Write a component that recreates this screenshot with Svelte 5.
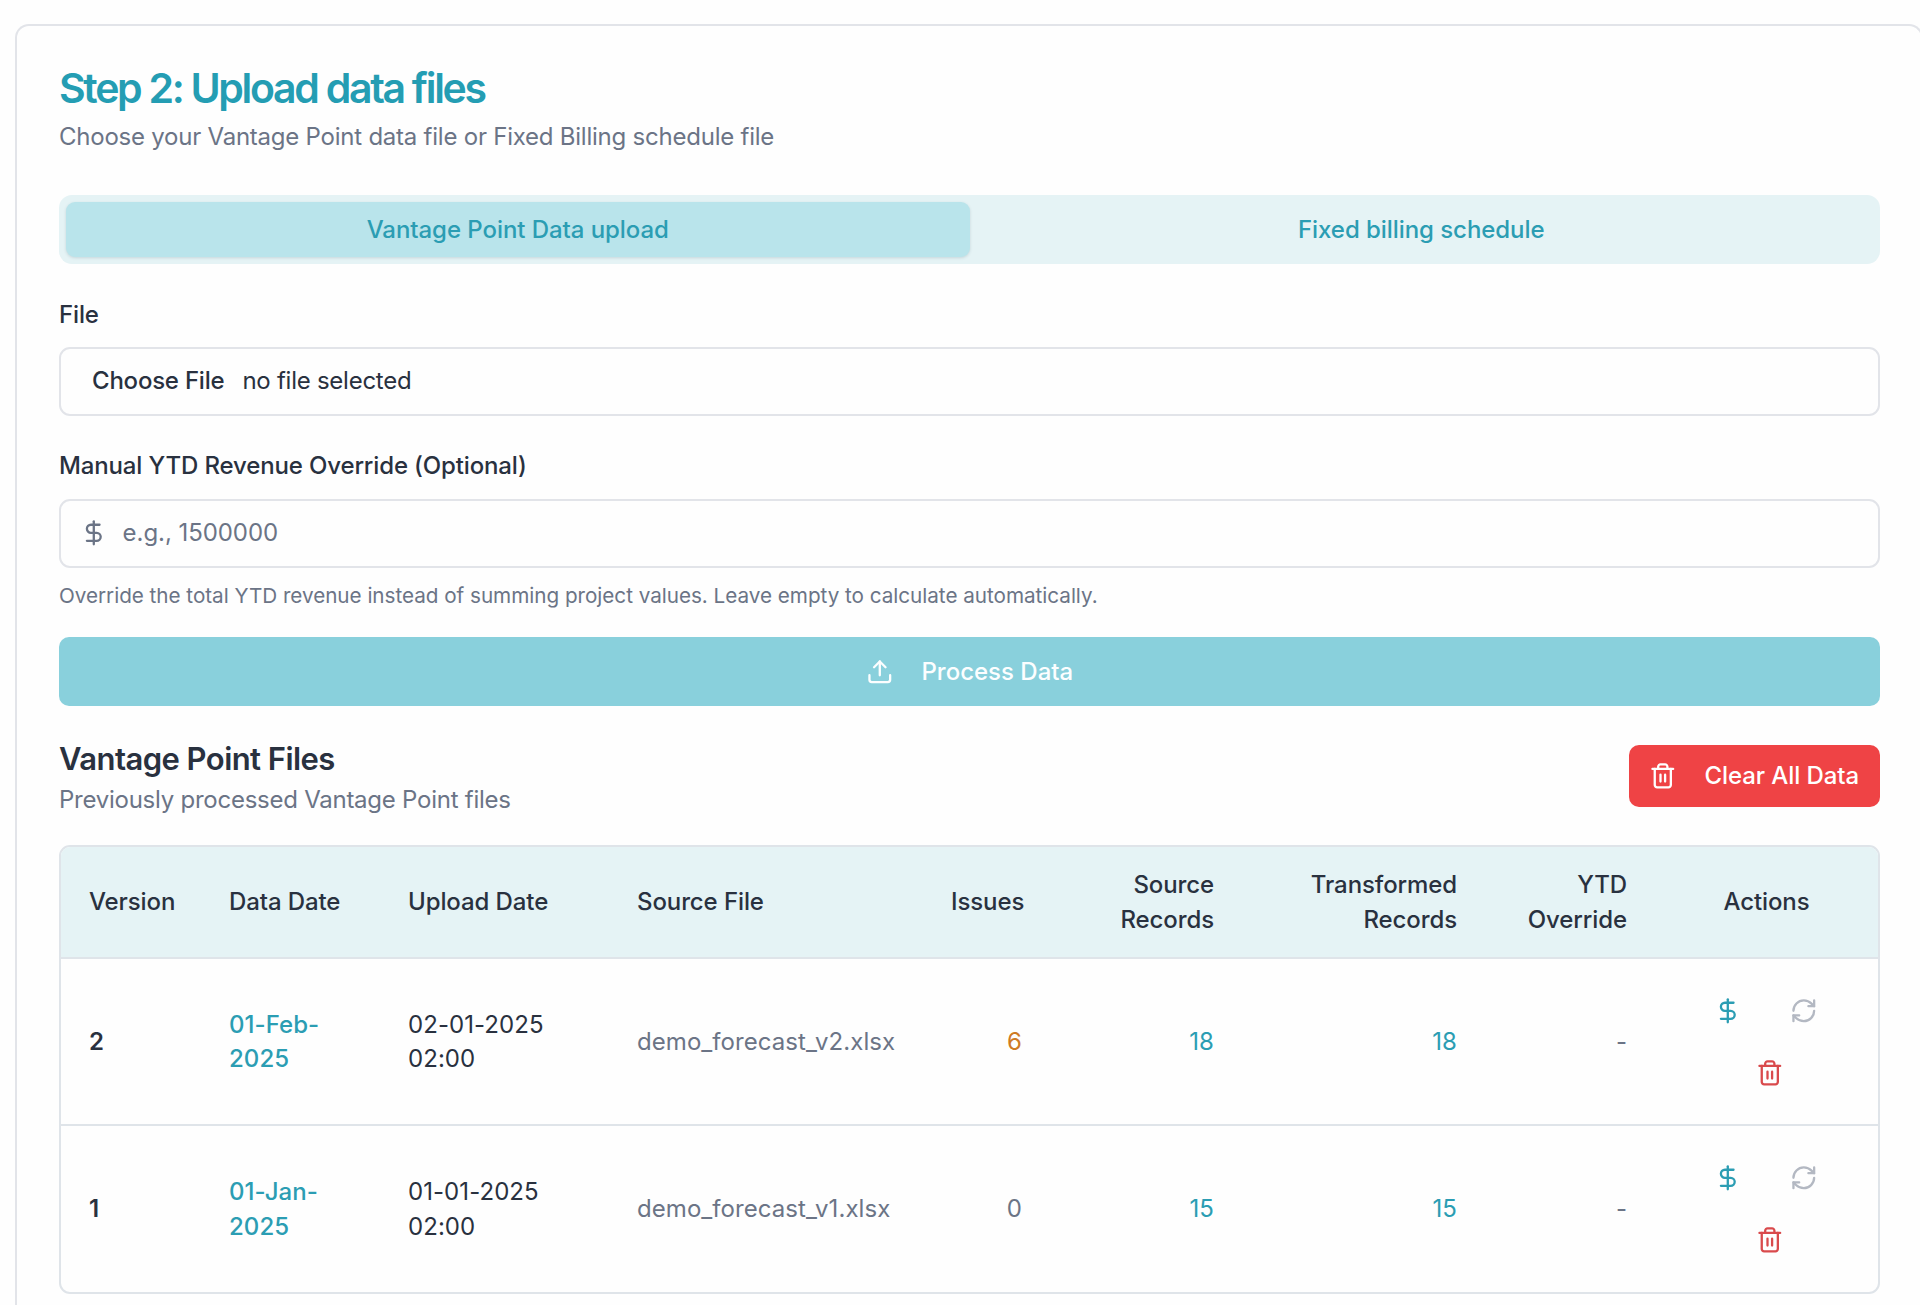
<script>
  let tab = 'vantage'

  const tabs = [
    { id: 'vantage', label: 'Vantage Point Data upload' },
    { id: 'fixed', label: 'Fixed billing schedule' }
  ]

  const files = [
    {
      version: 2,
      dataDate: '01-Feb-2025',
      uploadDate: '02-01-2025 02:00',
      source: 'demo_forecast_v2.xlsx',
      issues: 6,
      records: 18,
      transformed: 18
    },
    {
      version: 1,
      dataDate: '01-Jan-2025',
      uploadDate: '01-01-2025 02:00',
      source: 'demo_forecast_v1.xlsx',
      issues: 0,
      records: 15,
      transformed: 15
    }
  ]

  const icons = {
    dollar: ['M12 2v20', 'M17 5H9.5a3.5 3.5 0 0 0 0 7h5a3.5 3.5 0 0 1 0 7H6'],
    upload: [
      'M21 15v4a2 2 0 0 1-2 2H5a2 2 0 0 1-2-2v-4',
      'M17 8l-5-5-5 5',
      'M12 3v12'
    ],
    trash: [
      'M3 6h18',
      'M19 6v14c0 1-1 2-2 2H7c-1 0-2-1-2-2V6',
      'M8 6V4c0-1 1-2 2-2h4c1 0 2 1 2 2v2',
      'M10 11v6',
      'M14 11v6'
    ],
    refresh: [
      'M3 12a9 9 0 0 1 9-9 9.75 9.75 0 0 1 6.74 2.74L21 8',
      'M21 3v5h-5',
      'M21 12a9 9 0 0 1-9 9 9.75 9.75 0 0 1-6.74-2.74L3 16',
      'M8 16H3v5'
    ]
  }
</script>

<style>
  :global(body) {
    background: #fefefe;
  }

  .card {
    box-sizing: border-box;
    width: 1908px;
    height: 1281px;
    margin-left: 15px;
    padding: 38px 41px 0 42px;
    border: 2px solid #e2e4e9;
    border-bottom: 0;
    border-radius: 14px 14px 0 0;
    background: #fefefe;
    color: #29313f;
    font: 400 24px/34.5px Inter, sans-serif;
  }

  .page {
    height: 1305px;
    box-sizing: border-box;
    padding-top: 24px;
    overflow: hidden;
  }

  h2,
  h3,
  p {
    margin: 0;
  }

  h2 {
    color: #249db3;
    font-size: 41px;
    font-weight: 600;
    line-height: 48px;
    letter-spacing: -2.3px;
  }

  .muted {
    color: #6b7486;
  }

  .subtitle {
    margin-top: 8px;
    letter-spacing: -0.23px;
  }

  .tabs {
    box-sizing: border-box;
    display: grid;
    grid-template-columns: 1fr 1fr;
    height: 69px;
    margin-top: 40px;
    padding: 7px;
    border-radius: 13px;
    background: #e5f3f5;
  }

  button {
    padding: 0;
    border: 0;
    background: none;
    color: inherit;
    font: inherit;
  }

  .tabs button {
    padding-top: 2px;
    border-radius: 9px;
    color: #2b9db3;
    font-weight: 500;
    letter-spacing: -0.06px;
  }

  .tabs button.active {
    background: #b9e4eb;
    box-shadow: 0 1px 3px rgba(40, 70, 90, 0.16);
  }

  label {
    display: block;
    font-weight: 500;
    letter-spacing: -0.14px;
  }

  .file-label {
    margin-top: 34px;
  }

  .field {
    box-sizing: border-box;
    display: flex;
    align-items: center;
    height: 69px;
    margin-top: 15px;
    border: 2px solid #e2e4e9;
    border-radius: 11px;
  }

  .file-field {
    gap: 18px;
    padding: 0 0 1px 31px;
    letter-spacing: -0.25px;
  }

  .file-field label {
    letter-spacing: -0.22px;
  }

  .money-field {
    gap: 15px;
    padding-left: 19px;
    color: #6b7486;
    letter-spacing: -0.06px;
  }

  .override-label {
    margin-top: 33px;
  }

  .hint {
    margin-top: 11px;
    font-size: 20.7px;
    letter-spacing: -0.03px;
  }

  svg {
    display: block;
    width: 27.6px;
    height: 27.6px;
    fill: none;
    stroke: currentColor;
    stroke-width: 2;
    stroke-linecap: round;
    stroke-linejoin: round;
  }

  .process {
    display: flex;
    align-items: center;
    justify-content: center;
    gap: 28px;
    width: 100%;
    height: 69px;
    margin-top: 24px;
    padding-top: 1px;
    border-radius: 10px;
    background: #89d0dc;
    color: #fcfeff;
    font-weight: 500;
  }

  .files-head {
    display: flex;
    align-items: center;
    justify-content: space-between;
    margin-top: 29px;
  }

  h3 {
    font-size: 31px;
    font-weight: 600;
    line-height: 48px;
    letter-spacing: -0.55px;
  }

  .files-head p {
    letter-spacing: -0.25px;
  }

  .clear {
    display: flex;
    align-items: center;
    gap: 28px;
    height: 62px;
    padding: 0 21px 0 20px;
    border-radius: 10px;
    background: #ef4345;
    color: #fff;
    font-weight: 500;
    letter-spacing: -0.08px;
  }

  .table-wrap {
    margin-top: 27px;
    overflow: hidden;
    border: 2px solid #dfe4e9;
    border-radius: 11px;
  }

  table {
    width: 100%;
    table-layout: fixed;
    border-collapse: collapse;
  }

  th,
  td {
    box-sizing: border-box;
    padding: 2px 28px 0;
    font-weight: 400;
    text-align: left;
  }

  th {
    height: 111px;
    font-weight: 500;
    letter-spacing: -0.1px;
  }

  td {
    height: 167px;
    border-top: 2px solid #dfe4e9;
    letter-spacing: 0.06px;
  }

  thead {
    background: #e5f3f5;
  }

  .num {
    text-align: right;
  }

  th.center {
    text-align: center;
  }

  td.version {
    font-weight: 600;
  }

  .teal {
    color: #2b9db3;
  }

  td.date {
    font-weight: 500;
  }

  .warn {
    color: #cf7a25;
  }

  td.actions {
    padding: 1px 1px 0 0;
  }

  .buttons {
    display: flex;
    flex-wrap: wrap;
    justify-content: center;
    column-gap: 14px;
    width: 160px;
    margin: 0 auto;
  }

  .buttons button {
    display: grid;
    place-items: center;
    width: 62px;
    height: 62px;
  }

  .buttons .refresh {
    color: #b3b8c2;
  }

  .buttons .delete {
    margin-left: 7px;
    color: #d94a4c;
  }

  .w-version { width: 140px; }
  .w-date { width: 179px; }
  .w-upload { width: 229px; }
  .w-source { width: 314px; }
  .w-issues { width: 127px; }
  .w-records { width: 192px; }
  .w-transformed { width: 243px; }
  .w-ytd { width: 170px; }
</style>

{#snippet icon(name)}
  <svg viewBox="0 0 24 24" aria-hidden="true">
    {#each icons[name] as d}
      <path {d} />
    {/each}
  </svg>
{/snippet}

<main class="page">
  <section class="card">
    <h2>Step 2: Upload data files</h2>
    <p class="subtitle muted">Choose your Vantage Point data file or Fixed Billing schedule file</p>

    <div class="tabs">
      {#each tabs as t}
        <button class:active={tab === t.id} on:click={() => (tab = t.id)}>{t.label}</button>
      {/each}
    </div>

    <label class="file-label" for="file">File</label>
    <div class="field file-field" id="file">
      <label for="file">Choose File</label>
      <span>no file selected</span>
    </div>

    <label class="override-label" for="override">Manual YTD Revenue Override (Optional)</label>
    <div class="field money-field" id="override">
      {@render icon('dollar')}
      <span>e.g., 1500000</span>
    </div>
    <p class="hint muted">
      Override the total YTD revenue instead of summing project values. Leave empty to calculate automatically.
    </p>

    <button class="process">{@render icon('upload')} Process Data</button>

    <div class="files-head">
      <div>
        <h3>Vantage Point Files</h3>
        <p class="muted">Previously processed Vantage Point files</p>
      </div>
      <button class="clear">{@render icon('trash')} Clear All Data</button>
    </div>

    <div class="table-wrap">
      <table>
        <thead>
          <tr>
            <th class="w-version">Version</th>
            <th class="w-date">Data Date</th>
            <th class="w-upload">Upload Date</th>
            <th class="w-source">Source File</th>
            <th class="w-issues num">Issues</th>
            <th class="w-records num">Source Records</th>
            <th class="w-transformed num">Transformed Records</th>
            <th class="w-ytd num">YTD Override</th>
            <th class="center">Actions</th>
          </tr>
        </thead>
        <tbody>
          {#each files as file}
            <tr>
              <td class="version">{file.version}</td>
              <td class="date teal">{file.dataDate}</td>
              <td>{file.uploadDate}</td>
              <td class="muted">{file.source}</td>
              <td class="num {file.issues ? 'warn' : 'muted'}">{file.issues}</td>
              <td class="num teal">{file.records}</td>
              <td class="num teal">{file.transformed}</td>
              <td class="num muted">-</td>
              <td class="actions">
                <div class="buttons">
                  <button class="teal" aria-label="Override">{@render icon('dollar')}</button>
                  <button class="refresh" aria-label="Reprocess">{@render icon('refresh')}</button>
                  <button class="delete" aria-label="Delete">{@render icon('trash')}</button>
                </div>
              </td>
            </tr>
          {/each}
        </tbody>
      </table>
    </div>
  </section>
</main>
